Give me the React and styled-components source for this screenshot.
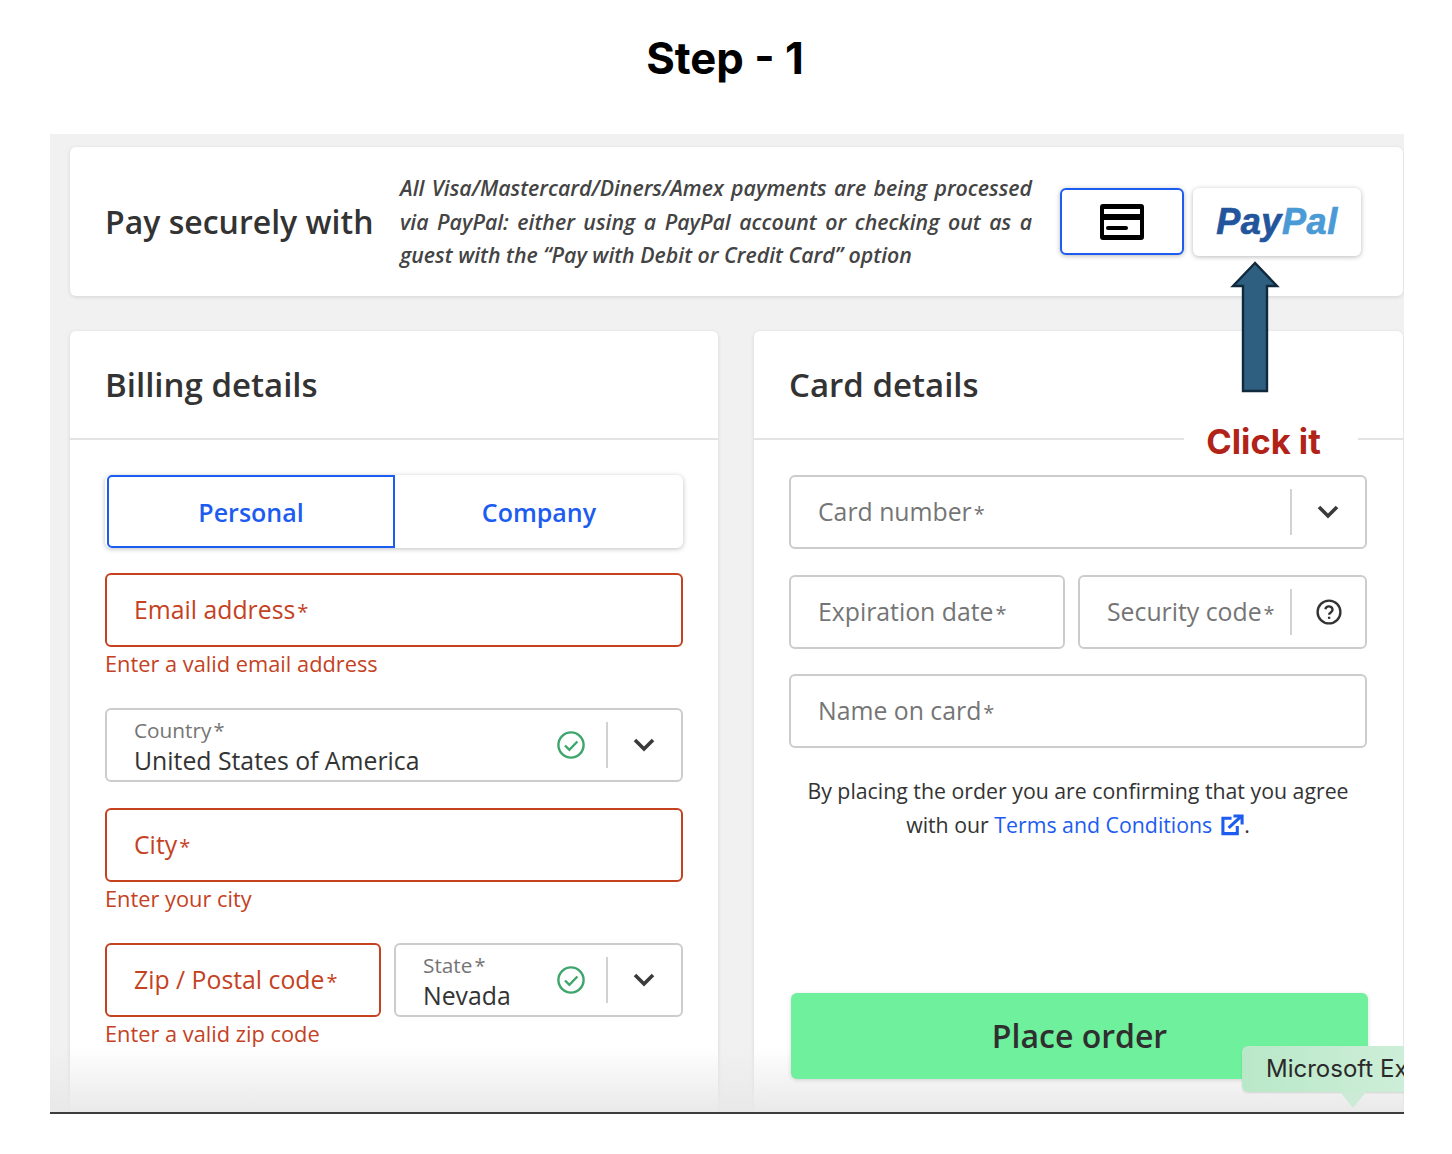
import React from "react"
import styled, { createGlobalStyle } from "styled-components"

const GlobalStyle = createGlobalStyle`
  * { box-sizing: border-box; }
  body {
    margin: 0;
    background: #fff;
    font-family: "Open Sans", "Liberation Sans", sans-serif;
    color: #333;
  }
`

const Page = styled.div`
  width: 1452px;
  height: 1154px;
  overflow: hidden;
`

const Heading = styled.h1`
  height: 134px;
  margin: 0;
  padding-top: 30px;
  padding-right: 2px;
  text-align: center;
  font-family: Inter, "Liberation Sans", sans-serif;
  font-size: 43.7px;
  line-height: 58px;
  font-weight: 700;
  color: #000;
`

const Panel = styled.div`
  position: relative;
  width: 1354px;
  height: 980px;
  margin-left: 50px;
  padding: 13px 1px 0 20px;
  background: #f1f1f1;
  border-bottom: 2px solid #3c3c3c;
  overflow: hidden;
`

const Card = styled.section`
  background: #fff;
  border-radius: 6px;
  box-shadow: 0 1px 4px rgba(0, 0, 0, 0.12);
`

const PayCard = styled(Card)`
  display: flex;
  align-items: center;
  height: 149px;
  padding: 0 42px 0 36px;
`

const PayTitle = styled.h2`
  width: 294px;
  flex: none;
  margin: 0 0 0 -1px;
  font-size: 32px;
  font-weight: 600;
  color: #333;
`

const PayNote = styled.p`
  width: 632px;
  flex: none;
  margin: 0 28px 0 1px;
  font-size: 21.3px;
  line-height: 33.5px;
  font-style: italic;
  font-weight: 600;
  color: #444;
  text-align: justify;
`

const MethodButton = styled.div`
  display: flex;
  align-items: center;
  justify-content: center;
  flex: none;
  width: ${p => p.$width}px;
  height: ${p => p.$height}px;
  margin-right: ${p => p.$gap || 0}px;
  background: #fff;
  border-radius: 6px;
  border: ${p => (p.$active ? "2px solid #1d5cf0" : "none")};
  box-shadow: 0 1px 5px rgba(0, 0, 0, 0.28);
`

const PayPalLogo = styled.span`
  font-family: "Liberation Sans", sans-serif;
  font-size: 36px;
  font-weight: 700;
  font-style: italic;
  letter-spacing: 0.6px;
  -webkit-text-stroke: 0.7px currentColor;
  color: #4a9ad6;
  b { color: #23559c; font-weight: 700; }
`

const Columns = styled.div`
  display: grid;
  grid-template-columns: 648px 649px;
  gap: 36px;
  margin-top: 35px;
`

const DetailsCard = styled(Card)`
  position: relative;
  height: 800px;
`

const CardTitle = styled.h2`
  height: 109px;
  margin: 0;
  padding: 0 35px;
  border-bottom: 2px solid #e3e3e3;
  font-size: 33px;
  line-height: 108px;
  font-weight: 600;
  color: #333;
`

const CardBody = styled.div`
  padding: 35px ${p => p.$right}px 0 35px;
`

const Tabs = styled.div`
  display: grid;
  grid-template-columns: 290px 1fr;
  height: 73px;
  margin-bottom: 25px;
  border-radius: 6px;
  box-shadow: 0 1px 5px rgba(0, 0, 0, 0.25);
`

const Tab = styled.div`
  display: flex;
  align-items: center;
  justify-content: center;
  margin-left: ${p => (p.$active ? "2px" : "0")};
  border: ${p => (p.$active ? "2px solid #1d5cf0" : "none")};
  border-radius: ${p => (p.$active ? "5px 0 0 5px" : "0 5px 5px 0")};
  font-size: 25px;
  font-weight: 600;
  color: #1d5cf0;
`

const Field = styled.div`
  display: flex;
  align-items: center;
  height: 74px;
  margin-bottom: ${p => p.$mb ?? 26}px;
  padding-left: 27px;
  background: #fff;
  border: 2px solid ${p => (p.$error ? "#c4421f" : "#cccccc")};
  border-radius: 6px;
`

const Placeholder = styled.span`
  flex: 1;
  padding-bottom: 2px;
  font-size: 24.8px;
  white-space: nowrap;
  color: ${p => (p.$error ? "#c4421f" : "#757575")};
`

const Star = styled.span`
  margin-left: 2px;
  font-size: 20px;
`

const ErrorText = styled.div`
  margin: 4px 0 31px;
  font-size: 21.8px;
  line-height: 26px;
  color: #c4421f;
`

const Stack = styled.div`
  flex: 1;
  display: flex;
  flex-direction: column;
  padding-top: 4px;
`

const SmallLabel = styled.span`
  font-size: 20.8px;
  line-height: 26px;
  color: #757575;
`

const Value = styled.span`
  font-size: 24.8px;
  line-height: 33px;
  color: #333;
`

const Divider = styled.span`
  flex: none;
  width: 2px;
  height: 46px;
  background: #d2d2d2;
`

const Addon = styled.span`
  flex: none;
  display: flex;
  align-items: center;
  justify-content: center;
  width: ${p => p.$width}px;
`

const TwoCols = styled.div`
  display: grid;
  grid-template-columns: ${p => p.$cols};
  gap: 13px;
`

const Terms = styled.p`
  margin: 26px 0 0;
  font-size: 21.3px;
  line-height: 34px;
  text-align: center;
  color: #333;
`

const TermsLink = styled.span`
  color: #1d5cf0;
`

const PlaceOrder = styled.div`
  position: relative;
  z-index: 1;
  width: 577px;
  height: 86px;
  margin: 151px 0 0 2px;
  background: #6ef09c;
  border-radius: 6px;
  box-shadow: 0 1px 4px rgba(0, 0, 0, 0.15);
  font-size: 32px;
  line-height: 86px;
  font-weight: 600;
  text-align: center;
  color: #2f2f2f;
`

const ClickNote = styled.div`
  position: absolute;
  left: 430px;
  top: 92px;
  width: 174px;
  height: 38px;
  padding-right: 15px;
  background: #fff;
  font-family: Inter, "Liberation Sans", sans-serif;
  font-size: 34.5px;
  line-height: 38px;
  font-weight: 700;
  text-align: center;
  color: #b12318;
`

const ArrowMark = styled.svg`
  position: absolute;
  left: 1179px;
  top: 127px;
`

const BottomFade = styled.div`
  position: absolute;
  left: 0;
  right: 0;
  bottom: 0;
  height: 66px;
  background: linear-gradient(rgba(232, 232, 232, 0), rgba(232, 232, 232, 0.95));
`

const Tooltip = styled.div`
  position: absolute;
  z-index: 2;
  left: 1192px;
  top: 912px;
  width: 260px;
  height: 46px;
  padding-left: 24px;
  background: linear-gradient(90deg, #b9e8c8 0, #cdeed8 162px);
  border-radius: 6px;
  box-shadow: 0 1px 2px rgba(0, 0, 0, 0.12);
  font-family: Inter, "Liberation Sans", sans-serif;
  font-size: 24px;
  line-height: 46px;
  white-space: nowrap;
  color: #2a2a2a;
  &::after {
    content: "";
    position: absolute;
    left: 98px;
    top: 46px;
    width: 26px;
    height: 16px;
    background: #cbebd6;
    clip-path: polygon(0 0, 100% 0, 50% 100%);
  }
`

const ChevronSvg = styled.svg`
  margin-right: 2px;
`

const Chevron = () => (
  <ChevronSvg width="24" height="16" viewBox="0 0 24 16" fill="none">
    <path d="M3 3l9 9 9-9" stroke="#3b3b3b" strokeWidth="3.6" />
  </ChevronSvg>
)

const CheckCircle = () => (
  <svg width="30" height="30" viewBox="0 0 30 30" fill="none">
    <circle cx="15" cy="15" r="12.6" stroke="#3ea66c" strokeWidth="2.4" />
    <path d="M9 15.5l4.4 4.4 8-8.4" stroke="#3ea66c" strokeWidth="2.4" />
  </svg>
)

const HelpCircle = () => (
  <svg width="28" height="28" viewBox="0 0 26 26" fill="none" stroke="#333" strokeWidth="2.2">
    <circle cx="13" cy="13" r="10.6" />
    <path d="M9.6 10.4a3.4 3.4 0 0 1 6.7.6c0 2.2-3.2 2.6-3.2 4.5" />
    <path d="M13.1 17.4v2" />
  </svg>
)

const ExternalSvg = styled.svg`
  vertical-align: -3px;
  margin-left: 9px;
`

const ExternalIcon = () => (
  <ExternalSvg width="23" height="22" viewBox="0 0 24 22" fill="none" stroke="#1d5cf0" strokeWidth="3.2">
    <path d="M11 4H2v16h15v-8" />
    <path d="M8 14L21 2M13 1.6h9v9" />
  </ExternalSvg>
)

const CardIcon = () => (
  <svg width="44" height="36" viewBox="0 0 44 36">
    <path fillRule="evenodd" fill="#000" d="M3 0h38a3 3 0 0 1 3 3v30a3 3 0 0 1-3 3H3a3 3 0 0 1-3-3V3a3 3 0 0 1 3-3zM4 5v5h36V5zM4 16v15h36V16z" />
    <rect x="6" y="22" width="22" height="4" rx="2" fill="#000" />
  </svg>
)

const SelectAddons = () => (
  <>
    <CheckCircle />
    <Addon $width={20} />
    <Divider />
    <Addon $width={73}><Chevron /></Addon>
  </>
)

export default function App() {
  return (
    <Page>
      <GlobalStyle />
      <Heading>Step - 1</Heading>
      <Panel>
        <PayCard>
          <PayTitle>Pay securely with</PayTitle>
          <PayNote>
            All Visa/Mastercard/Diners/Amex payments are being processed via PayPal: either using a PayPal account or checking out as a guest with the “Pay with Debit or Credit Card” option
          </PayNote>
          <MethodButton $active $width={124} $height={67} $gap={9}><CardIcon /></MethodButton>
          <MethodButton $width={168} $height={68}><PayPalLogo><b>Pay</b>Pal</PayPalLogo></MethodButton>
        </PayCard>
        <Columns>
          <DetailsCard>
            <CardTitle>Billing details</CardTitle>
            <CardBody $right={35}>
              <Tabs>
                <Tab $active>Personal</Tab>
                <Tab>Company</Tab>
              </Tabs>
              <Field $error $mb={0}><Placeholder $error>Email address<Star>*</Star></Placeholder></Field>
              <ErrorText>Enter a valid email address</ErrorText>
              <Field>
                <Stack>
                  <SmallLabel>Country<Star>*</Star></SmallLabel>
                  <Value>United States of America</Value>
                </Stack>
                <SelectAddons />
              </Field>
              <Field $error $mb={0}><Placeholder $error>City<Star>*</Star></Placeholder></Field>
              <ErrorText>Enter your city</ErrorText>
              <TwoCols $cols="276px 289px">
                <div>
                  <Field $error $mb={0}><Placeholder $error>Zip / Postal code<Star>*</Star></Placeholder></Field>
                  <ErrorText>Enter a valid zip code</ErrorText>
                </div>
                <Field $mb={0}>
                  <Stack>
                    <SmallLabel>State<Star>*</Star></SmallLabel>
                    <Value>Nevada</Value>
                  </Stack>
                  <SelectAddons />
                </Field>
              </TwoCols>
            </CardBody>
          </DetailsCard>
          <DetailsCard>
            <CardTitle>Card details</CardTitle>
            <ClickNote>Click it</ClickNote>
            <CardBody $right={36}>
              <Field>
                <Placeholder>Card number<Star>*</Star></Placeholder>
                <Divider />
                <Addon $width={73}><Chevron /></Addon>
              </Field>
              <TwoCols $cols="276px 289px">
                <Field $mb={25}><Placeholder>Expiration date<Star>*</Star></Placeholder></Field>
                <Field $mb={25}>
                  <Placeholder>Security code<Star>*</Star></Placeholder>
                  <Divider />
                  <Addon $width={73}><HelpCircle /></Addon>
                </Field>
              </TwoCols>
              <Field $mb={0}><Placeholder>Name on card<Star>*</Star></Placeholder></Field>
              <Terms>
                By placing the order you are confirming that you agree<br />
                with our <TermsLink>Terms and Conditions<ExternalIcon /></TermsLink>.
              </Terms>
              <PlaceOrder>Place order</PlaceOrder>
            </CardBody>
          </DetailsCard>
        </Columns>
        <ArrowMark width="52" height="132" viewBox="0 0 52 132">
          <path d="M26 2L4 25h10v105h24V25h10z" fill="#2e5f80" stroke="#10293c" strokeWidth="2.4" />
        </ArrowMark>
        <BottomFade />
        <Tooltip>Microsoft Excel</Tooltip>
      </Panel>
    </Page>
  )
}
